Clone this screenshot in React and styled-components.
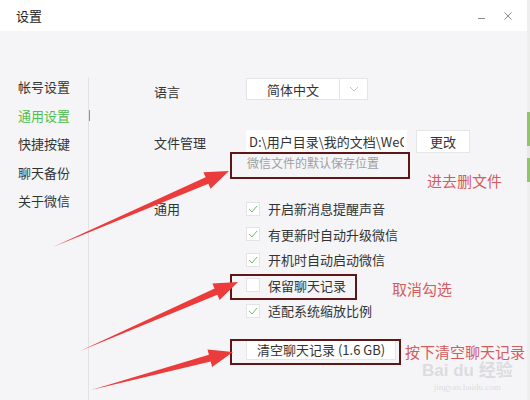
import React from 'react';
import styled, { createGlobalStyle } from 'styled-components';

const GlobalStyle = createGlobalStyle`
    html, body {
        margin: 0;
        padding: 0;
        background: #ffffff;
    }
    body {
        font-family: "Noto Sans CJK SC", "Noto Sans", "Liberation Sans", sans-serif;
        font-size: 13px;
        color: #333333;
    }
`;

const Screen = styled.div`
    position: relative;
    width: 530px;
    height: 400px;
    overflow: hidden;
    display: flex;
`;

const Window = styled.div`
    flex: 1;
    display: flex;
    flex-direction: column;
    background: #f5f5f7;
`;

const EdgeStrip = styled.div`
    width: 3px;
    background: linear-gradient(
        #eeeeee 0, #eeeeee 112px, #8fc46a 112px, #8fc46a 146px,
        #e9e9e9 146px, #e9e9e9 158px, #8fc46a 158px, #8fc46a 182px, #eeeeee 182px
    );
`;

const TitleBar = styled.div`
    height: 31px;
    background: #ffffff;
    display: flex;
    align-items: center;
    justify-content: space-between;
    padding: 0 14px 0 16px;
    box-sizing: border-box;
`;

const Title = styled.span`
    font-size: 13px;
    color: #222;
`;

const WinButtons = styled.div`
    display: flex;
    align-items: center;
    gap: 16px;
    color: #8a8a8a;
`;

const Body = styled.div`
    flex: 1;
    display: flex;
`;

const Sidebar = styled.nav`
    width: 70px;
    padding: 42px 0 0 18px;
    display: flex;
    flex-direction: column;
`;

const NavItem = styled.div`
    height: 28.5px;
    line-height: 20px;
    display: flex;
    align-items: center;
    justify-content: space-between;
    margin-right: -2px;
    color: ${p => (p.active ? '#4fbf4f' : '#333')};
    font-size: 13px;
`;

const ActiveMark = styled.span`
    width: 2px;
    height: 11px;
    background: #4fbf4f;
`;

const Content = styled.div`
    flex: 1;
    margin-top: 46px;
    border-left: 1px solid #e2e2e4;
    padding: 1px 0 0 65px;
    display: grid;
    grid-template-columns: 92px 1fr;
    grid-auto-rows: min-content;
    align-content: start;
`;

const Label = styled.div`
    font-size: 13px;
    color: #333;
    line-height: ${p => p.lh || '22px'};
    padding-top: ${p => p.pt || '0'};
`;

const Field = styled.div`
    display: flex;
    flex-direction: column;
    margin-bottom: ${p => p.mb || '0'};
`;

const Select = styled.div`
    display: flex;
    width: 122px;
    height: 22px;
    background: #ffffff;
    border: 1px solid #e4e4e6;
    box-sizing: border-box;
`;

const SelectValue = styled.div`
    width: 92px;
    display: flex;
    align-items: center;
    justify-content: center;
    font-size: 13px;
    color: #333;
    border-right: 1px solid #e4e4e6;
`;

const SelectArrow = styled.div`
    flex: 1;
    display: flex;
    align-items: center;
    justify-content: center;
`;

const FileRow = styled.div`
    display: flex;
    gap: 9px;
    align-items: center;
`;

const PathInput = styled.div`
    width: 161px;
    height: 23px;
    background: #ffffff;
    box-sizing: border-box;
    padding: 0 3px;
    overflow: hidden;
`;

const PathText = styled.div`
    width: 155px;
    font-size: 13px;
    line-height: 23px;
    white-space: nowrap;
    overflow: hidden;
`;

const Button = styled.div`
    display: inline-flex;
    align-items: center;
    justify-content: center;
    height: ${p => p.h || '23px'};
    width: ${p => p.w || 'auto'};
    padding: 0 ${p => p.px || '0'};
    background: #ffffff;
    border: 1px solid #e6e6e8;
    box-sizing: border-box;
    font-size: 13px;
    color: #333;
    white-space: nowrap;
`;

const Hint = styled.div`
    font-size: 12px;
    color: #a0a0a0;
    line-height: 18px;
    padding: 1px 0 0 1px;
`;

const CheckList = styled.div`
    display: flex;
    flex-direction: column;
`;

const CheckRow = styled.div`
    height: 25.5px;
    display: flex;
    align-items: center;
    gap: 8px;
    font-size: 13px;
    color: #333;
`;

const Box = styled.span`
    width: 14px;
    height: 14px;
    background: #ffffff;
    border: 1px solid #e3e3e5;
    box-sizing: border-box;
    display: flex;
    align-items: center;
    justify-content: center;
`;

const Overlay = styled.svg`
    position: absolute;
    left: 0;
    top: 0;
    pointer-events: none;
`;

const Note = styled.div`
    position: absolute;
    left: ${p => p.x}px;
    top: ${p => p.y}px;
    font-size: 15px;
    color: #d65b5b;
    white-space: nowrap;
`;

const Watermark = styled.div`
    position: absolute;
    left: 422px;
    top: 362px;
    color: rgba(195, 195, 200, 0.5);
    text-align: center;
    line-height: 1;
    white-space: nowrap;
`;

const WmBig = styled.div`
    font-family: "Liberation Sans", "Noto Sans CJK SC", sans-serif;
    font-weight: bold;
    font-size: 17px;
`;

const WmSmall = styled.div`
    font-family: "Liberation Serif", serif;
    font-size: 9px;
    margin-top: 4px;
`;

const Check = () => (
    <svg width="10" height="8" viewBox="0 0 10 8">
        <path d="M1 4 L4 7 L9 1" fill="none" stroke="#6cbf6c" strokeWidth="1" />
    </svg>
);

const Option = ({ checked, children }) => (
    <CheckRow>
        <Box>{checked && <Check />}</Box>
        <span>{children}</span>
    </CheckRow>
);

// arrow drawn as a tapering wedge ending in a triangular head
const arrowPoints = (tx, ty, px, py) => {
    const dx = px - tx, dy = py - ty;
    const len = Math.hypot(dx, dy);
    const ux = dx / len, uy = dy / len;
    const nx = -uy, ny = ux;
    const L = 24, W = 9, w = 3.5;
    const bx = px - ux * L, by = py - uy * L;
    const pts = [
        [tx, ty],
        [bx + nx * w, by + ny * w],
        [bx + nx * W, by + ny * W],
        [px, py],
        [bx - nx * W, by - ny * W],
        [bx - nx * w, by - ny * w],
    ];
    return pts.map(p => p.map(v => v.toFixed(1)).join(',')).join(' ');
};

const arrows = [
    [53, 247, 229, 171],
    [80, 351, 238, 282],
    [91, 390, 233, 352],
];

const frames = [
    { x: 231, y: 153, w: 178, h: 25 },
    { x: 231, y: 275, w: 125, h: 24 },
    { x: 231, y: 340, w: 169, h: 24 },
];

const App = () => (
    <>
        <GlobalStyle />
        <Screen>
            <Window>
                <TitleBar>
                    <Title>设置</Title>
                    <WinButtons>
                        <svg width="10" height="10" viewBox="0 0 10 10">
                            <path d="M1 7.5 H8" stroke="#8a8a8a" strokeWidth="1" />
                        </svg>
                        <svg width="10" height="10" viewBox="0 0 10 10">
                            <path d="M1.5 1.5 L8.5 8.5 M8.5 1.5 L1.5 8.5" stroke="#8a8a8a" strokeWidth="1" />
                        </svg>
                    </WinButtons>
                </TitleBar>
                <Body>
                    <Sidebar>
                        <NavItem>帐号设置</NavItem>
                        <NavItem active>通用设置<ActiveMark /></NavItem>
                        <NavItem>快捷按键</NavItem>
                        <NavItem>聊天备份</NavItem>
                        <NavItem>关于微信</NavItem>
                    </Sidebar>
                    <Content>
                        <Label pt="3px">语言</Label>
                        <Field mb="30px">
                            <Select>
                                <SelectValue>简体中文</SelectValue>
                                <SelectArrow>
                                    <svg width="10" height="6" viewBox="0 0 10 6">
                                        <path d="M1 1 L5 5 L9 1" fill="none" stroke="#c8c8c8" strokeWidth="1" />
                                    </svg>
                                </SelectArrow>
                            </Select>
                        </Field>
                        <Label pt="2px">文件管理</Label>
                        <Field mb="24px">
                            <FileRow>
                                <PathInput>
                                    <PathText>D:\用户目录\我的文档\WeChat Files</PathText>
                                </PathInput>
                                <Button w="54px">更改</Button>
                            </FileRow>
                            <Hint>微信文件的默认保存位置</Hint>
                        </Field>
                        <Label lh="25.5px">通用</Label>
                        <Field mb="15px">
                            <CheckList>
                                <Option checked>开启新消息提醒声音</Option>
                                <Option checked>有更新时自动升级微信</Option>
                                <Option checked>开机时自动启动微信</Option>
                                <Option>保留聊天记录</Option>
                                <Option checked>适配系统缩放比例</Option>
                            </CheckList>
                        </Field>
                        <div />
                        <Field>
                            <div>
                                <Button h="21px" px="10px">清空聊天记录 (1.6 GB)</Button>
                            </div>
                        </Field>
                    </Content>
                </Body>
            </Window>
            <EdgeStrip />

            <Watermark>
                <WmBig>Bai du 经验</WmBig>
                <WmSmall>jingyan.baidu.com</WmSmall>
            </Watermark>

            <Overlay width="530" height="400" viewBox="0 0 530 400">
                {frames.map((f, i) => (
                    <rect key={i} x={f.x} y={f.y} width={f.w} height={f.h}
                        fill="none" stroke="#5e1616" strokeWidth="2" />
                ))}
                {arrows.map((a, i) => (
                    <polygon key={i} points={arrowPoints(...a)} fill="#ec3b3b" />
                ))}
            </Overlay>
            <Note x={427} y={170}>进去删文件</Note>
            <Note x={392} y={278}>取消勾选</Note>
            <Note x={405} y={341}>按下清空聊天记录</Note>
        </Screen>
    </>
);

export default App;
